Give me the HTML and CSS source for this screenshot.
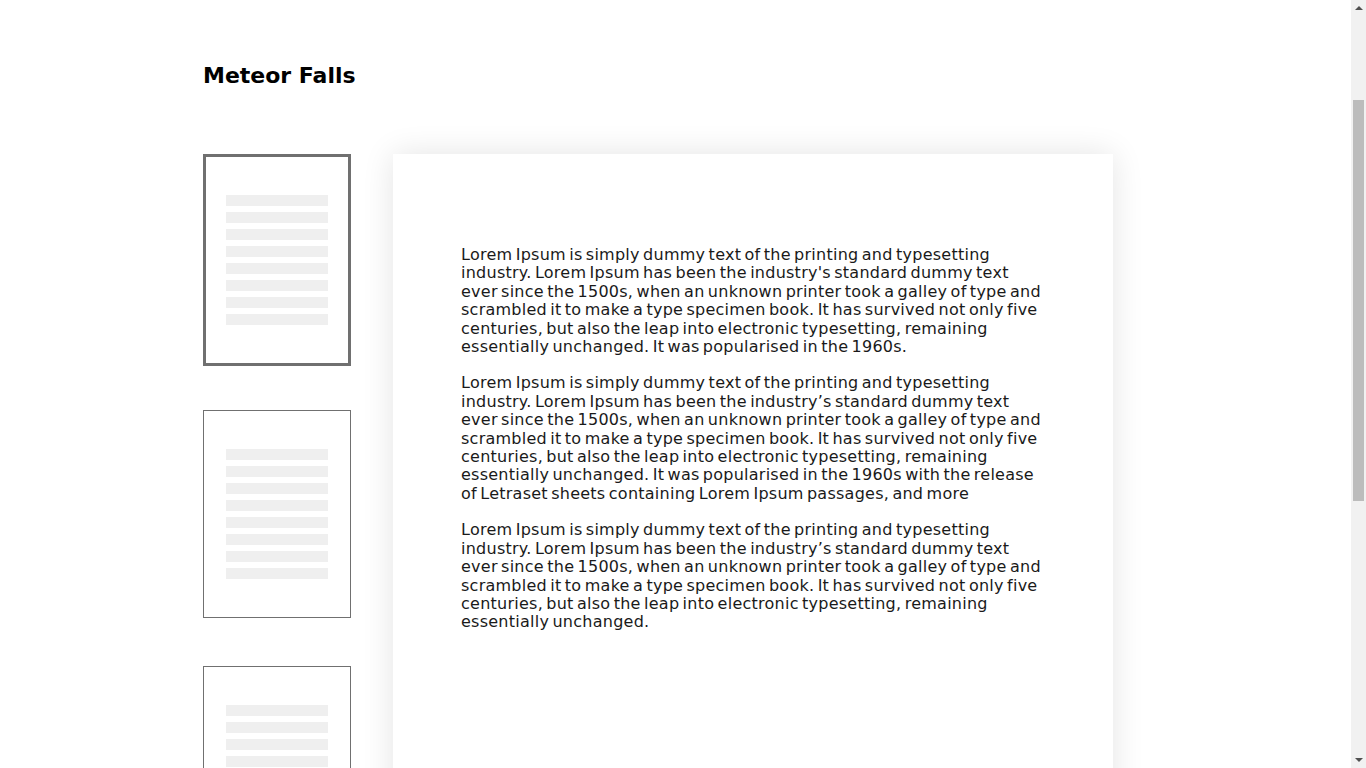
FILE: index.html
```html
<!DOCTYPE html>
<html lang="en">
<head>
<meta charset="utf-8">
<title>Meteor Falls</title>
<link rel="stylesheet" href="styles.css">
</head>
<body>
<div class="page">
  <h1 class="title">Meteor Falls</h1>
  <div class="layout">
    <div class="thumbs">
      <div class="slot">
        <div class="thumb active">
          <span class="bar"></span><span class="bar"></span><span class="bar"></span><span class="bar"></span>
          <span class="bar"></span><span class="bar"></span><span class="bar"></span><span class="bar"></span>
        </div>
      </div>
      <div class="slot">
        <div class="thumb">
          <span class="bar"></span><span class="bar"></span><span class="bar"></span><span class="bar"></span>
          <span class="bar"></span><span class="bar"></span><span class="bar"></span><span class="bar"></span>
        </div>
      </div>
      <div class="slot">
        <div class="thumb">
          <span class="bar"></span><span class="bar"></span><span class="bar"></span><span class="bar"></span>
          <span class="bar"></span><span class="bar"></span><span class="bar"></span><span class="bar"></span>
        </div>
      </div>
      <div class="slot">
        <div class="thumb">
          <span class="bar"></span><span class="bar"></span><span class="bar"></span><span class="bar"></span>
          <span class="bar"></span><span class="bar"></span><span class="bar"></span><span class="bar"></span>
        </div>
      </div>
    </div>
    <div class="sheet">
      <p>Lorem Ipsum is simply dummy text of the printing and typesetting industry. Lorem Ipsum has been the industry's standard dummy text ever since the 1500s, when an unknown printer took a galley of type and scrambled it to make a type specimen book. It has survived not only five centuries, but also the leap into electronic typesetting, remaining essentially unchanged. It was popularised in the 1960s.</p>
      <p>Lorem Ipsum is simply dummy text of the printing and typesetting industry. Lorem Ipsum has been the industry’s standard dummy text ever since the 1500s, when an unknown printer took a galley of type and scrambled it to make a type specimen book. It has survived not only five centuries, but also the leap into electronic typesetting, remaining essentially unchanged. It was popularised in the 1960s with the release of Letraset sheets containing Lorem Ipsum passages, and more</p>
      <p>Lorem Ipsum is simply dummy text of the printing and typesetting industry. Lorem Ipsum has been the industry’s standard dummy text ever since the 1500s, when an unknown printer took a galley of type and scrambled it to make a type specimen book. It has survived not only five centuries, but also the leap into electronic typesetting, remaining essentially unchanged.</p>
    </div>
  </div>
</div>
<div class="scrollbar" aria-hidden="true">
  <span class="arrow up"></span>
  <span class="track"><span class="thumb-bar"></span></span>
  <span class="arrow down"></span>
</div>
</body>
</html>
```
FILE: styles.css
```css
html, body {
  margin: 0;
  padding: 0;
  background: #ffffff;
}

body {
  font-family: "DejaVu Sans", "Noto Sans", sans-serif;
  color: #1a1a1a;
  padding-right: 15px;
}

.page {
  width: 945px;
  margin: 0 auto;
  padding: 62px 0 56px;
}

.title {
  margin: 0;
  font-size: 22px;
  line-height: 28px;
  font-weight: 700;
  color: #000;
}

.layout {
  display: flex;
  align-items: flex-start;
  gap: 42px;
  margin-top: 64px;
}

.thumbs {
  display: flex;
  flex-direction: column;
  width: 148px;
  flex: none;
}

.slot {
  height: 256px;
}

.thumb {
  box-sizing: border-box;
  width: 148px;
  border: 1px solid #707070;
  padding: 38px 0;
  display: flex;
  flex-direction: column;
  align-items: center;
  gap: 6px;
  background: #fff;
}

.thumb.active {
  border-width: 3px;
}

.bar {
  display: block;
  width: 102px;
  height: 11px;
  background: #efefef;
}

.sheet {
  box-sizing: border-box;
  width: 720px;
  min-height: 1200px;
  padding: 92px 68px;
  background: #fff;
  box-shadow: 0 0 30px rgba(0, 0, 0, 0.11);
}

.sheet p {
  margin: 0 0 18px;
  font-size: 16px;
  line-height: 18.4px;
  word-spacing: -2px;
  letter-spacing: 0.25px;
  color: #1a1a1a;
}

/* drawn scrollbar overlay */
.scrollbar {
  position: fixed;
  top: 0;
  right: 0;
  width: 15px;
  height: 100vh;
  background: #f1f1f1;
  display: flex;
  flex-direction: column;
  align-items: center;
}

.arrow {
  flex: none;
  width: 0;
  height: 0;
  border-left: 4px solid transparent;
  border-right: 4px solid transparent;
}

.arrow.up {
  margin: 6px 0 5px;
  border-bottom: 4px solid #505050;
}

.arrow.down {
  margin: 5px 0 6px;
  border-top: 4px solid #505050;
}

.track {
  flex: 1;
  width: 100%;
  display: flex;
  justify-content: center;
}

.thumb-bar {
  display: block;
  width: 11px;
  height: 401px;
  margin-top: 85px;
  background: #bcbcbc;
}
```
